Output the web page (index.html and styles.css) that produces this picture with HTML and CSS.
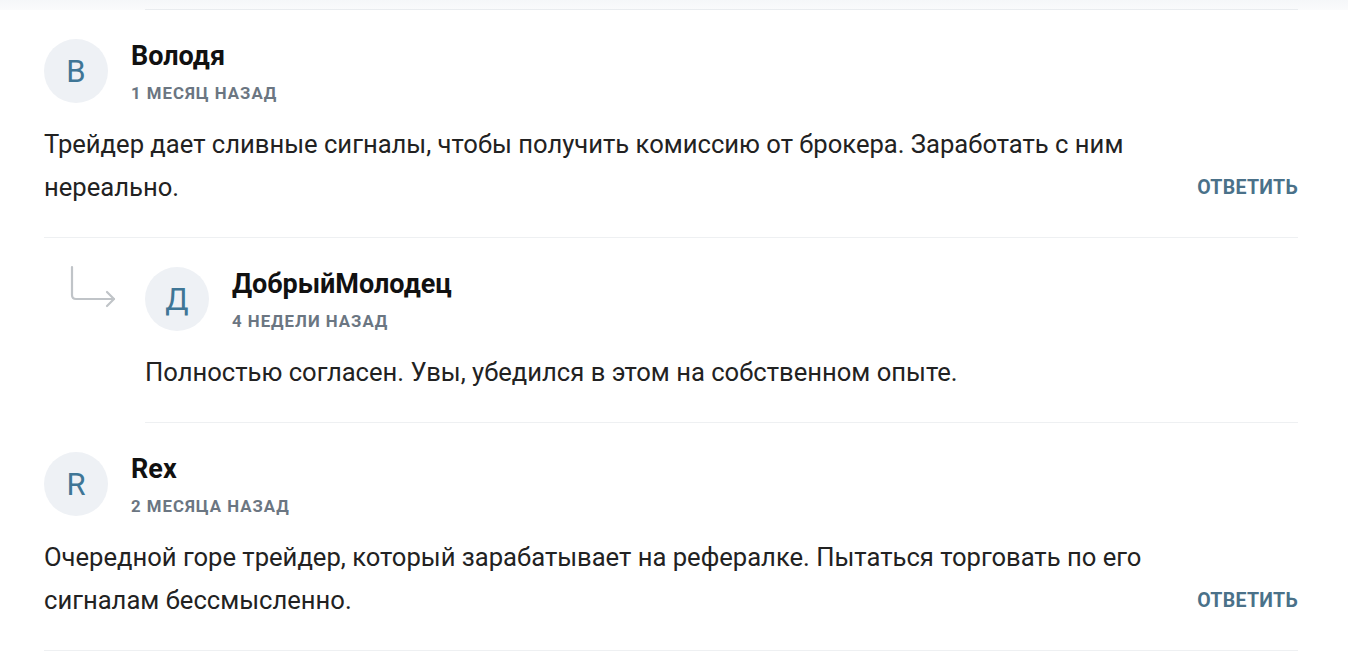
FILE: index.html
```html
<!DOCTYPE html>
<html lang="ru">
<head>
<meta charset="utf-8">
<link rel="stylesheet" href="styles.css">
</head>
<body>
<div class="top-band"><div class="top-line"></div></div>
<div class="comments">
  <div class="comment">
    <div class="head">
      <div class="avatar">В</div>
      <div class="meta">
        <div class="name">Володя</div>
        <div class="date">1 месяц назад</div>
      </div>
    </div>
    <div class="body">
      <p class="text">Трейдер дает сливные сигналы, чтобы получить комиссию от брокера. Заработать с ним нереально.</p>
      <a class="reply">Ответить</a>
    </div>
  </div>
  <div class="comment child">
    <svg class="arrow" width="48" height="44" viewBox="0 0 48 44" fill="none" stroke="#c0c4c8" stroke-width="2.2" stroke-linecap="round" stroke-linejoin="round">
      <path d="M3 2 V30 Q3 34 7 34 H45"/>
      <path d="M38 27 L45 34 L38 41"/>
    </svg>
    <div class="inner">
      <div class="head">
        <div class="avatar">Д</div>
        <div class="meta">
          <div class="name">ДобрыйМолодец</div>
          <div class="date">4 недели назад</div>
        </div>
      </div>
      <div class="body">
        <p class="text">Полностью согласен. Увы, убедился в этом на собственном опыте.</p>
      </div>
    </div>
  </div>
  <div class="comment last">
    <div class="head">
      <div class="avatar">R</div>
      <div class="meta">
        <div class="name">Rex</div>
        <div class="date">2 месяца назад</div>
      </div>
    </div>
    <div class="body">
      <p class="text">Очередной горе трейдер, который зарабатывает на рефералке. Пытаться торговать по его сигналам бессмысленно.</p>
      <a class="reply">Ответить</a>
    </div>
  </div>
</div>
</body>
</html>
```
FILE: styles.css
```css
html, body {
  margin: 0;
  padding: 0;
  background: #ffffff;
}
body {
  font-family: Roboto, "Noto Sans", sans-serif;
  color: #222222;
  width: 1348px;
  height: 662px;
  overflow: hidden;
}
.top-band {
  height: 10px;
  background: linear-gradient(#f5f7f9, #fafbfc);
  padding-left: 145px;
  padding-right: 50px;
  display: flex;
  align-items: flex-end;
}
.top-line {
  flex: 1;
  height: 1px;
  background: #e9ecef;
}
.comments {
  padding: 0 50px 0 44px;
}
.comment {
  padding: 29px 0 28px;
  border-bottom: 1px solid #eef0f2;
}
.comment.child {
  margin-left: 101px;
  position: relative;
  padding-bottom: 28px;
}
.comment.last {
  padding-bottom: 28px;
}
.arrow {
  position: absolute;
  left: -76px;
  top: 27px;
}
.head {
  display: flex;
  align-items: center;
  gap: 23px;
}
.avatar {
  width: 64px;
  height: 64px;
  border-radius: 50%;
  background: #eef1f5;
  color: #3f7696;
  font-size: 31px;
  display: flex;
  align-items: center;
  justify-content: center;
  flex: none;
}
.meta {
  display: flex;
  flex-direction: column;
  gap: 12px;
  margin-top: 1px;
}
.name {
  font-weight: 700;
  font-size: 27px;
  line-height: 30px;
  color: #111111;
}
.date {
  font-weight: 700;
  font-size: 16.8px;
  line-height: 20px;
  letter-spacing: 1px;
  text-transform: uppercase;
  color: #6b7682;
}
.body {
  display: flex;
  align-items: flex-end;
  justify-content: space-between;
  gap: 24px;
  margin-top: 20px;
}
.text {
  margin: 0;
  font-size: 25.6px;
  line-height: 43px;
  max-width: 1130px;
  color: #222222;
}
.reply {
  font-weight: 700;
  font-size: 19.5px;
  line-height: 43px;
  text-transform: uppercase;
  letter-spacing: 0.3px;
  color: #4a7189;
  white-space: nowrap;
  cursor: pointer;
}
```
